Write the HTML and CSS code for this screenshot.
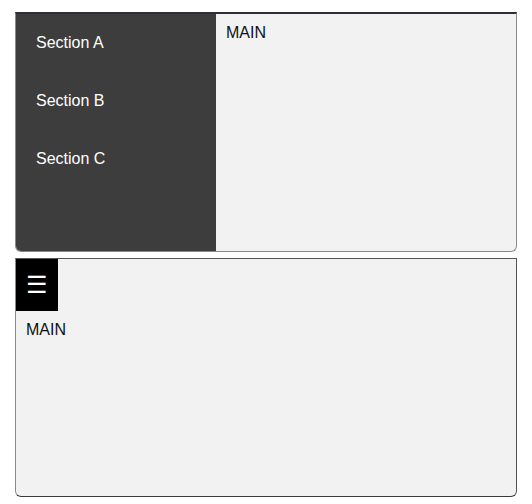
FILE: index.html
```html
<!DOCTYPE html>
<html>
<head>
<meta charset="utf-8">
<link rel="stylesheet" href="styles.css">
</head>
<body>
<div class="page">
  <div class="panel panel-top">
    <nav class="sidebar">
      <div class="nav-item">Section A</div>
      <div class="nav-item">Section B</div>
      <div class="nav-item">Section C</div>
    </nav>
    <main class="main">MAIN</main>
  </div>
  <div class="panel panel-bottom">
    <div class="menu-btn">&#9776;</div>
    <main class="main main-mobile">MAIN</main>
  </div>
</div>
</body>
</html>
```
FILE: styles.css
```css
html, body {
  margin: 0;
  padding: 0;
  background: #ffffff;
}
body {
  font-family: "Liberation Sans", Arial, sans-serif;
  font-size: 16px;
  color: #111;
}
.page {
  padding: 12px 15px 0 15px;
  width: 502px;
  display: flex;
  flex-direction: column;
  gap: 6px;
}
.panel {
  background: #f2f2f2;
  border: 1px solid #8a8a8a;
  border-top: 2px solid #2e2e36;
  border-radius: 0 0 6px 6px;
  overflow: hidden;
}
.panel-top {
  height: 237px;
  display: flex;
}
.sidebar {
  width: 200px;
  background: #3d3d3d;
  color: #ffffff;
  padding-top: 20px;
  display: flex;
  flex-direction: column;
  gap: 40px;
}
.nav-item {
  padding-left: 20px;
  line-height: 18px;
  font-size: 16px;
}
.main {
  padding: 10px 10px;
  line-height: 18px;
}
.panel-bottom {
  height: 237px;
  border-top: 1px solid #555;
  border-right-color: #555;
  border-bottom-color: #3a3a3a;
}
.menu-btn {
  width: 42px;
  height: 52px;
  background: #000;
  color: #fff;
  font-size: 24px;
  display: flex;
  align-items: center;
  justify-content: center;
}
.main-mobile {
  padding: 10px 10px;
}
```
